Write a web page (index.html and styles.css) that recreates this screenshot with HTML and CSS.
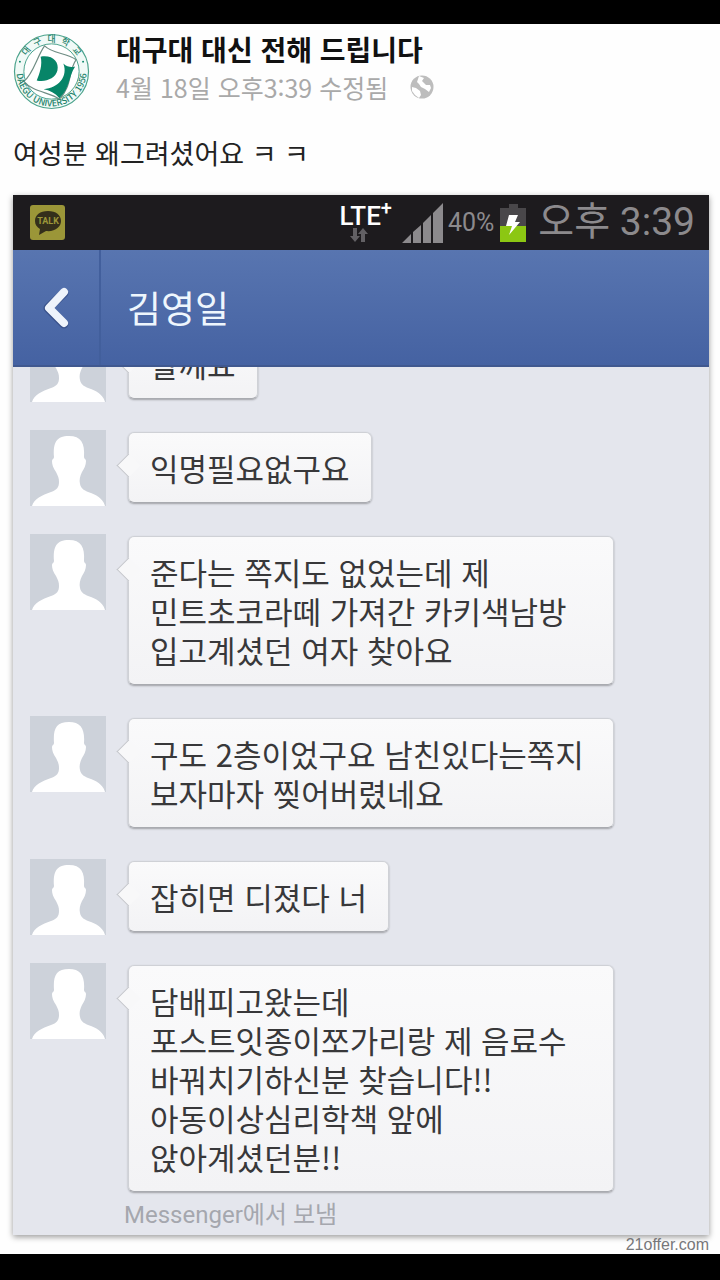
FILE: index.html
```
<!DOCTYPE html>
<html lang="ko">
<head>
    <meta charset="UTF-8">
    <meta name="viewport" content="width=device-width, initial-scale=1.0">
    <title>대구대 대신 전해 드립니다</title>
    <link rel="stylesheet" href="styles.css">
</head>
<body>
    <!-- Avatar silhouette, reused by every message -->
    <svg class="defs" width="0" height="0" aria-hidden="true">
        <symbol id="person" viewBox="0 0 76 76">
            <path fill="#fff" d="M2 76C4 69 12 65 21 62C27 60 29 57 29 52C29 48 28 46 26 42C23 38 22 34 22 31C22 29 24 29 24 27C23 13 26 6 39 6C51 6 55 13 54 27C54 29 56 29 56 31C56 35 54 39 52 42C50 46 49 50 50 54C51 59 55 61 61 63C69 66 74 71 75 76Z"/>
        </symbol>
    </svg>

    <main class="post">
        <header class="post-header">
            <svg class="logo" viewBox="0 0 78 78" role="img" aria-label="Daegu University">
                <circle cx="39" cy="39" r="37.5" fill="#f1faf7" stroke="#4ba38c" stroke-width="1.2"/>
                <circle cx="39" cy="39" r="28" fill="#fff" stroke="#4ba38c" stroke-width="1"/>
                <path d="M32 13C40 21 54 20 64 27C56 38 60 54 47 67C38 60 20 60 11 49C21 41 24 24 32 13Z" fill="#fff" stroke="#6f8d84" stroke-width="1.2"/>
                <path d="M28 24C40 22 47 29 45 38C43 46 33 50 24 48C27 41 30 32 28 24Z" fill="#078568"/>
                <path d="M51 31C55 35 60 35 63 34C56 44 58 56 47 66C43 61 37 58 31 57C46 56 56 44 51 31Z" fill="#078568"/>
                <path id="arcTop" d="M9 39A30 30 0 0 1 69 39" fill="none"/>
                <path id="arcBottom" d="M4 33A35.5 35.5 0 1 0 74 33" fill="none"/>
                <text class="logo-text"><textPath href="#arcTop" startOffset="50%" text-anchor="middle">대  구  대  학  교</textPath></text>
                <text class="logo-text"><textPath href="#arcBottom" startOffset="50%" text-anchor="middle">DAEGU UNIVERSITY 1956</textPath></text>
                <circle cx="7" cy="29" r="1" fill="#078568"/>
                <circle cx="71" cy="29" r="1" fill="#078568"/>
            </svg>
            <div class="post-info">
                <h1 class="page-name">대구대 대신 전해 드립니다</h1>
                <div class="post-date">
                    <span>4월 18일 오후3:39 수정됨</span>
                    <svg class="globe" viewBox="0 0 24 24" aria-hidden="true">
                        <circle cx="12" cy="12" r="11.5" fill="#bdbdbd"/>
                        <path fill="#fff" d="M9 1L14 3L12 6L16 10L20 10L21 13L19 17L15 14L11 12L9 9L7 7ZM2 12L6 13L10 16L11 20L9 23L5 20L2 16Z"/>
                    </svg>
                </div>
            </div>
        </header>
        <p class="post-text">여성분 왜그려셨어요 ㅋ ㅋ</p>

        <section class="phone">
            <div class="status-bar">
                <svg class="talk" viewBox="0 0 35 35" aria-hidden="true">
                    <rect width="35" height="35" rx="3" fill="#9b9638"/>
                    <path fill="#342f1b" d="M18 6C10 6 5 10 5 16C5 20 7 22 10 24L9 30L16 26C25 27 31 22 31 16C31 10 26 6 18 6Z"/>
                    <text class="talk-text" x="18" y="19" text-anchor="middle">TALK</text>
                </svg>
                <div class="network">
                    <span class="lte">LTE<sup class="plus">+</sup></span>
                    <svg class="arrows" viewBox="0 0 20 14" aria-hidden="true">
                        <path fill="#626064" d="M4 0H8V8H11L6 14L1 8H4ZM12 14V6H9L14 0L19 6H16V14Z"/>
                    </svg>
                </div>
                <svg class="signal" viewBox="0 0 42 40" aria-hidden="true">
                    <path fill="#8c8a8d" d="M0 40L9 31V40ZM11 29L19 22V40H11ZM21 20L29 12V40H21ZM31 10L41 0V40H31Z"/>
                </svg>
                <span class="percent">40%</span>
                <svg class="battery" viewBox="0 0 26 38" aria-hidden="true">
                    <path fill="#49474a" d="M9 0H18V4H26V22H0V4H9Z"/>
                    <path fill="#8cc713" d="M0 22H26V38H0Z"/>
                    <path fill="#fff" d="M9 11H18L15 18H20L9 31L12 22H6Z"/>
                </svg>
                <span class="clock">오후 3:39</span>
            </div>

            <div class="chat-header">
                <button class="back" type="button" aria-label="뒤로">
                    <svg class="back-icon" viewBox="0 0 28 44" aria-hidden="true">
                        <path d="M22 7L6 22L22 38" fill="none" stroke="#39518a" stroke-width="9" stroke-linecap="round" stroke-linejoin="round"/>
                        <path d="M22 6L7 22L22 37" fill="none" stroke="#eef3fb" stroke-width="8" stroke-linecap="round" stroke-linejoin="round"/>
                    </svg>
                </button>
                <h2 class="chat-name">김영일</h2>
            </div>

            <div class="chat">
                <div class="message">
                    <svg class="avatar"><use href="#person"/></svg>
                    <p class="bubble">할께요</p>
                </div>
                <div class="message">
                    <svg class="avatar"><use href="#person"/></svg>
                    <p class="bubble">익명필요없구요</p>
                </div>
                <div class="message">
                    <svg class="avatar"><use href="#person"/></svg>
                    <p class="bubble">준다는 쪽지도 없었는데 제 민트초코라떼 가져간 카키색남방 입고계셨던 여자 찾아요</p>
                </div>
                <div class="message">
                    <svg class="avatar"><use href="#person"/></svg>
                    <p class="bubble">구도 2층이었구요 남친있다는쪽지 보자마자 찢어버렸네요</p>
                </div>
                <div class="message">
                    <svg class="avatar"><use href="#person"/></svg>
                    <p class="bubble">잡히면 디졌다 너</p>
                </div>
                <div class="message">
                    <svg class="avatar"><use href="#person"/></svg>
                    <p class="bubble">담배피고왔는데 포스트잇종이쪼가리랑 제 음료수 바꿔치기하신분 찾습니다!! 아동이상심리학책 앞에 앉아계셨던분!!</p>
                </div>
                <p class="sent-from">Messenger에서 보냄</p>
            </div>
        </section>

        <footer class="watermark">21offer.com</footer>
    </main>
</body>
</html>
```
FILE: styles.css
```
* {
    box-sizing: border-box;
}

body {
    margin: 0;
    padding: 24px 0;
    background-color: #000;
    font-family: "Noto Sans CJK KR", sans-serif;
}

h1, h2, p {
    margin: 0;
}

svg {
    display: block;
    flex: none;
}

.defs {
    position: absolute;
}

.post {
    background-color: #fefefe;
    padding: 9px 11px 0 13px;
}

/* Post header */
.post-header {
    display: flex;
    gap: 26px;
}

.logo {
    width: 77px;
    height: 77px;
}

.logo-text {
    font-size: 9px;
    font-weight: 500;
    fill: #25836c;
    white-space: pre;
}

.post-info {
    padding-bottom: 24px;
}

.page-name {
    font-size: 28px;
    line-height: 32px;
    font-weight: bold;
    color: #111;
}

.post-date {
    display: flex;
    align-items: center;
    gap: 22px;
    font-size: 25px;
    line-height: 44px;
    color: #a9a9a9;
}

.globe {
    width: 24px;
    height: 24px;
}

.post-text {
    padding-bottom: 22px;
    font-size: 27px;
    line-height: 40px;
    color: #222;
}

/* Phone screen */
.phone {
    background-color: #e4e6ed;
    box-shadow: 0 2px 6px rgba(0, 0, 0, 0.4);
}

.status-bar {
    display: flex;
    align-items: center;
    height: 55px;
    padding: 0 14px 0 17px;
    background-color: #1d1b1e;
    color: #8c8a8d;
    font-family: Roboto, "Noto Sans CJK KR", sans-serif;
}

.talk {
    width: 35px;
    height: 35px;
    margin-right: auto;
}

.talk-text {
    font-size: 9px;
    font-weight: bold;
    fill: #9b9638;
}

.network {
    margin-right: 10px;
}

.lte {
    display: block;
    font-size: 26px;
    line-height: 24px;
    font-weight: 500;
    color: #fff;
}

.plus {
    font-size: 20px;
    line-height: 0;
}

.arrows {
    width: 20px;
    height: 14px;
    margin-left: 10px;
}

.signal {
    width: 42px;
    height: 40px;
    margin-right: 4px;
}

.percent {
    margin-right: 6px;
    font-size: 25px;
}

.battery {
    width: 26px;
    height: 38px;
    margin-right: 12px;
}

.clock {
    font-size: 39px;
    line-height: 55px;
}

/* Chat header */
.chat-header {
    display: flex;
    align-items: center;
    height: 117px;
    background: linear-gradient(#5875b0, #4562a2);
    border-bottom: 2px solid #40588f;
}

.back {
    display: flex;
    align-items: center;
    justify-content: center;
    align-self: stretch;
    width: 88px;
    padding: 0;
    border: none;
    border-right: 2px solid #425f9c;
    background: none;
    cursor: pointer;
}

.back-icon {
    width: 28px;
    height: 44px;
}

.chat-name {
    padding: 0 0 2px 26px;
    font-size: 37px;
    line-height: 56px;
    font-weight: normal;
    color: #eef6fd;
}

/* Messages */
.chat {
    display: flex;
    flex-direction: column;
    gap: 31px;
    padding: 0 17px;
    overflow: hidden;
}

.message {
    display: flex;
    align-items: flex-start;
    gap: 22px;
}

/* The first message is scrolled halfway under the header */
.message:first-child {
    margin-top: -41px;
}

.avatar {
    width: 76px;
    height: 76px;
    margin-bottom: -4px;
    background-color: #cdd2da;
}

.bubble {
    position: relative;
    max-width: 486px;
    margin-top: 2px;
    padding: 15px 21px;
    border: 1px solid #cfd1d6;
    border-bottom-color: #a9abb0;
    border-radius: 6px;
    background: linear-gradient(#fafafb, #f3f3f5);
    box-shadow: 0 1px 2px rgba(0, 0, 0, 0.3);
    font-size: 31px;
    line-height: 39px;
    color: #38383a;
    word-break: keep-all;
}

.bubble::before {
    content: "";
    position: absolute;
    top: 24px;
    left: -9px;
    width: 16px;
    height: 16px;
    border: solid #c3c6cb;
    border-width: 0 0 1px 1px;
    background-color: #f8f8f9;
    transform: rotate(45deg);
}

.sent-from {
    margin-top: -26px;
    padding: 0 0 2px 94px;
    font-family: Roboto, "Noto Sans CJK KR", sans-serif;
    font-size: 24px;
    line-height: 36px;
    color: #a5a7ae;
}

.watermark {
    font-family: "Liberation Sans", sans-serif;
    font-size: 16px;
    line-height: 19px;
    text-align: right;
    color: #77777a;
}
```
